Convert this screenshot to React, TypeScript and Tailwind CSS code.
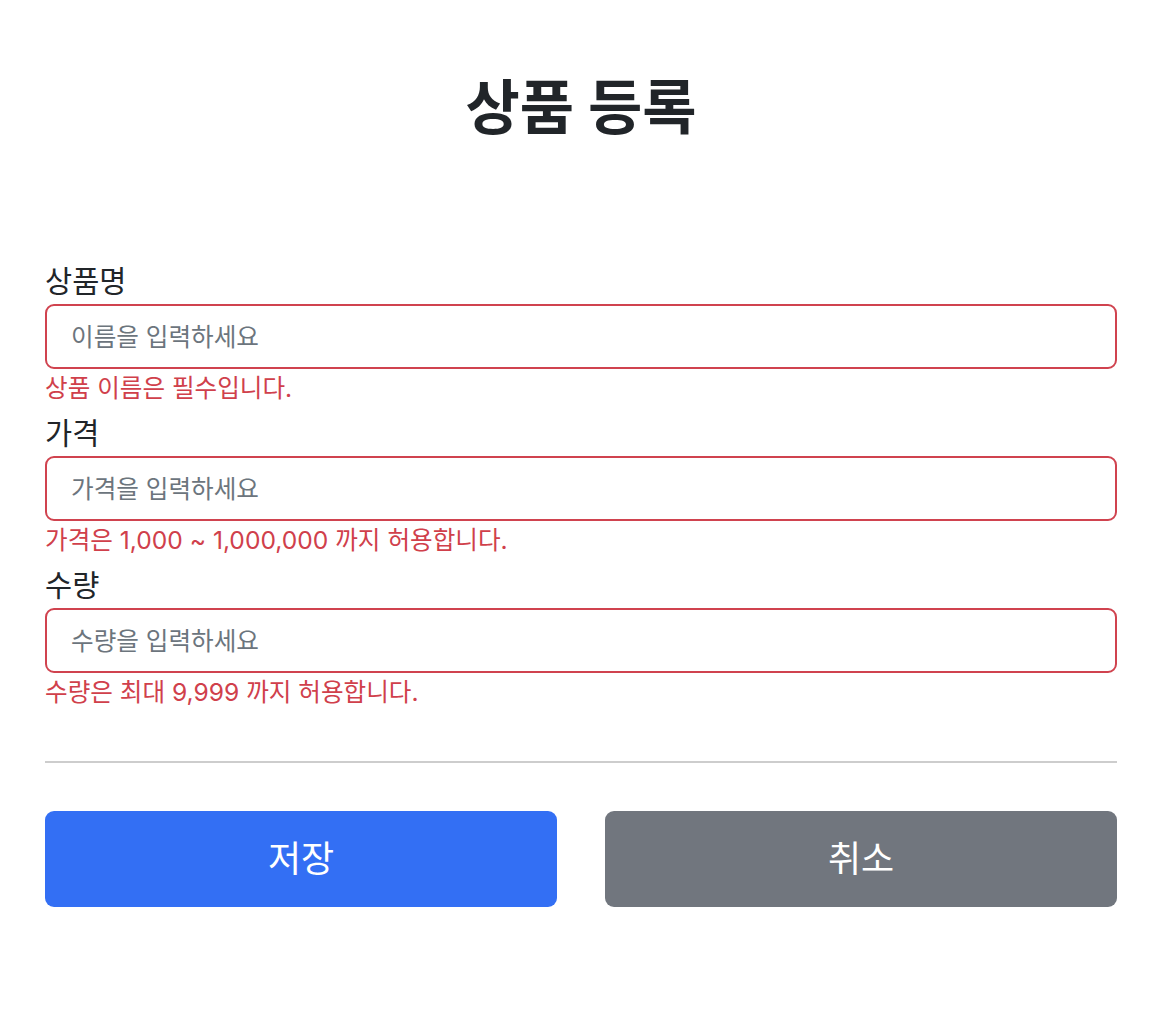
import React from 'react';

const fields = [
  { label: '상품명', placeholder: '이름을 입력하세요', error: '상품 이름은 필수입니다.' },
  { label: '가격', placeholder: '가격을 입력하세요', error: '가격은 1,000 ~ 1,000,000 까지 허용합니다.' },
  { label: '수량', placeholder: '수량을 입력하세요', error: '수량은 최대 9,999 까지 허용합니다.' },
];

const App = () => {
  return (
    <div
      className="min-h-[1028px] bg-white text-[#212529]"
      style={{ fontFamily: '"Inter", "Noto Sans CJK KR", sans-serif' }}
    >
      <div className="ml-[45px] w-[1072px]">
        {/* Title */}
        <h2 className="pt-[74px] text-center text-[59px] font-bold leading-[67px]">상품 등록</h2>

        {/* Form */}
        <form className="mt-[120px]" onSubmit={(e) => e.preventDefault()}>
          {fields.map((field) => (
            <div key={field.label} className="mb-[8px]">
              <label className="mb-[3px] block text-[29.5px] leading-[40px]">{field.label}</label>
              <input
                type="text"
                placeholder={field.placeholder}
                className="block h-[65px] w-full rounded-[9px] border-2 border-[#d0434f] bg-white px-[24px] text-[24.6px] outline-none placeholder:text-[#6c757d]"
              />
              <div className="mt-[2px] text-[24.6px] leading-[34px] text-[#d0404b]">{field.error}</div>
            </div>
          ))}

          <div className="mt-[52px] h-[2px] bg-[#cdcdcd]" />

          {/* Buttons */}
          <div className="mt-[48px] grid grid-cols-2 gap-[48px]">
            <button
              type="submit"
              className="h-[96px] rounded-[9px] bg-[#336ff4] text-[36px] text-white"
            >
              저장
            </button>
            <button
              type="button"
              className="h-[96px] rounded-[9px] bg-[#71767e] text-[36px] text-white"
            >
              취소
            </button>
          </div>
        </form>
      </div>
    </div>
  );
};

export default App;
